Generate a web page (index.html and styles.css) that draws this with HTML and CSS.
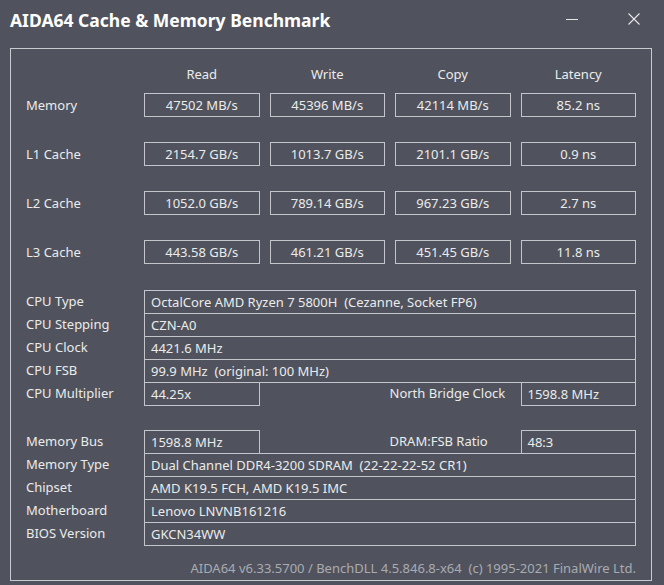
FILE: index.html
```html
<!DOCTYPE html>
<html lang="en">
<head>
    <meta charset="UTF-8">
    <meta name="viewport" content="width=device-width, initial-scale=1.0">
    <title>AIDA64 Cache &amp; Memory Benchmark</title>
    <link rel="stylesheet" href="styles.css">
</head>
<body>

    <div class="window">
        <!-- Title bar -->
        <div class="titlebar">
            <h1>AIDA64 Cache &amp; Memory Benchmark</h1>
            <div class="controls">
                <svg class="ctl" width="14" height="14" viewBox="0 0 14 14">
                    <line x1="1" y1="7.5" x2="13" y2="7.5" stroke="#e6e6e6" stroke-width="1"/>
                </svg>
                <svg class="ctl" width="14" height="14" viewBox="0 0 14 14">
                    <line x1="1.5" y1="1.5" x2="12.5" y2="12.5" stroke="#e6e6e6" stroke-width="1.1"/>
                    <line x1="12.5" y1="1.5" x2="1.5" y2="12.5" stroke="#e6e6e6" stroke-width="1.1"/>
                </svg>
            </div>
        </div>

        <div class="panel">
            <!-- Benchmark results -->
            <div class="bench-head">
                <div></div>
                <div>Read</div>
                <div>Write</div>
                <div>Copy</div>
                <div>Latency</div>
            </div>
            <div class="bench">
                <div class="label">Memory</div>
                <div class="result">47502 MB/s</div>
                <div class="result">45396 MB/s</div>
                <div class="result">42114 MB/s</div>
                <div class="result">85.2 ns</div>

                <div class="label">L1 Cache</div>
                <div class="result">2154.7 GB/s</div>
                <div class="result">1013.7 GB/s</div>
                <div class="result">2101.1 GB/s</div>
                <div class="result">0.9 ns</div>

                <div class="label">L2 Cache</div>
                <div class="result">1052.0 GB/s</div>
                <div class="result">789.14 GB/s</div>
                <div class="result">967.23 GB/s</div>
                <div class="result">2.7 ns</div>

                <div class="label">L3 Cache</div>
                <div class="result">443.58 GB/s</div>
                <div class="result">461.21 GB/s</div>
                <div class="result">451.45 GB/s</div>
                <div class="result">11.8 ns</div>
            </div>

            <!-- CPU info -->
            <div class="info">
                <div class="label">CPU Type</div>
                <div class="box wide">OctalCore AMD Ryzen 7 5800H&nbsp; (Cezanne, Socket FP6)</div>

                <div class="label">CPU Stepping</div>
                <div class="box wide">CZN-A0</div>

                <div class="label">CPU Clock</div>
                <div class="box wide">4421.6 MHz</div>

                <div class="label">CPU FSB</div>
                <div class="box wide">99.9 MHz&nbsp; (original: 100 MHz)</div>

                <div class="label">CPU Multiplier</div>
                <div class="box">44.25x</div>
                <div class="label inner">North Bridge Clock</div>
                <div class="box">1598.8 MHz</div>
            </div>

            <!-- Memory / board info -->
            <div class="info second">
                <div class="label">Memory Bus</div>
                <div class="box">1598.8 MHz</div>
                <div class="label inner">DRAM:FSB Ratio</div>
                <div class="box">48:3</div>

                <div class="label">Memory Type</div>
                <div class="box wide">Dual Channel DDR4-3200 SDRAM&nbsp; (22-22-22-52 CR1)</div>

                <div class="label">Chipset</div>
                <div class="box wide">AMD K19.5 FCH, AMD K19.5 IMC</div>

                <div class="label">Motherboard</div>
                <div class="box wide">Lenovo LNVNB161216</div>

                <div class="label">BIOS Version</div>
                <div class="box wide">GKCN34WW</div>
            </div>

            <div class="footer">AIDA64 v6.33.5700 / BenchDLL 4.5.846.8-x64&nbsp; (c) 1995-2021 FinalWire Ltd.</div>
        </div>
    </div>

</body>
</html>
```

FILE: styles.css
```css
body {
    margin: 0;
    background-color: #50535d;
    color: #ebebeb;
    font-family: "Noto Sans", "Open Sans", sans-serif;
    font-size: 13px;
}

.window {
    width: 664px;
    height: 585px;
}

.titlebar {
    height: 48px;
    display: flex;
    justify-content: space-between;
}

.titlebar h1 {
    margin: 0;
    padding: 8px 0 0 10px;
    font-size: 17.5px;
    font-weight: bold;
    line-height: 24px;
    color: #ffffff;
}

.controls {
    display: flex;
    gap: 48px;
    padding: 12px 23px 0 0;
}

.ctl {
    display: block;
}

.panel {
    margin: 0 12px 0 10px;
    border: 1px solid #c9cacf;
    padding: 15px 0 3px 15px;
    height: 533px;
    box-sizing: border-box;
}

.bench-head,
.bench {
    display: grid;
    grid-template-columns: 108px repeat(4, 115.5px);
    column-gap: 10px;
}

.bench-head {
    height: 20px;
    line-height: 20px;
    margin-bottom: 9px;
    text-align: center;
}

.bench {
    grid-auto-rows: 24px;
    row-gap: 25px;
}

.label {
    line-height: 23px;
    white-space: nowrap;
}

.bench .label {
    line-height: 24px;
}

.result {
    border: 1px solid #c4c5ca;
    box-sizing: border-box;
    height: 24px;
    line-height: 22px;
    text-align: center;
}

.info {
    display: grid;
    grid-template-columns: 118px 115.5px 1fr 115.5px;
    grid-auto-rows: 23px;
    width: 610px;
    margin-top: 26px;
}

.info.second {
    margin-top: 25px;
}

.box {
    border: 1px solid #c4c5ca;
    box-sizing: border-box;
    height: 24px;
    line-height: 22px;
    padding-left: 6px;
    white-space: nowrap;
}

.box.wide {
    grid-column: 2 / 5;
}

.label.inner {
    padding-left: 130px;
}

.footer {
    margin-top: 13px;
    width: 610px;
    height: 20px;
    line-height: 20px;
    text-align: right;
    color: #a9abb2;
}
```
